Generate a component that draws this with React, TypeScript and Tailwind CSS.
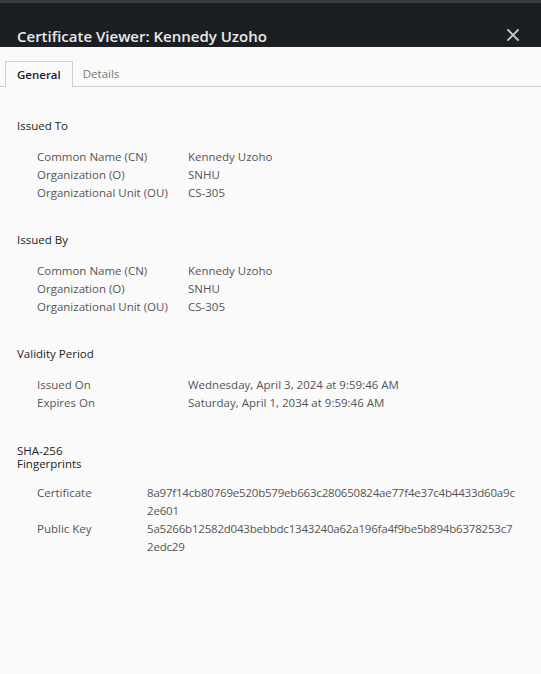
import React from "react";

type Row = [string, React.ReactNode];

function Section({
  title,
  rows,
  labelW,
  className = "",
  titleClass = "leading-[18px]",
  rowsGap = "mt-[13px]",
}: {
  title: React.ReactNode;
  rows: Row[];
  labelW: string;
  className?: string;
  titleClass?: string;
  rowsGap?: string;
}) {
  return (
    <div className={className}>
      <div className={`text-[#222] ${titleClass}`}>{title}</div>
      <div className={`${rowsGap} pl-[20px] flex flex-col`}>
        {rows.map(([k, v], i) => (
          <div key={i} className="flex leading-[18px] text-[#555]">
            <div className={labelW}>{k}</div>
            <div>{v}</div>
          </div>
        ))}
      </div>
    </div>
  );
}

export default function App() {
  return (
    <div
      className="w-[541px] h-[674px] bg-[#fafafa] flex flex-col text-[11.5px]"
      style={{ fontFamily: '"Open Sans", "Noto Sans", sans-serif' }}
    >
      <div className="border-t-[3px] border-[#3b3c3d] bg-[#1b1f22] h-[47px] flex items-start justify-between pl-[17px] pr-[22px]">
        <div className="mt-[23px] text-[15px] leading-[20px] font-semibold text-[#e8eaed]">
          Certificate Viewer: Kennedy Uzoho
        </div>
        <svg
          className="mt-[26px]"
          width="12"
          height="12"
          viewBox="0 0 12 12"
          stroke="#c8cacc"
          strokeWidth="1.8"
          strokeLinecap="square"
        >
          <path d="M1 1L11 11M11 1L1 11" />
        </svg>
      </div>

      <div className="pt-[14px] px-[5px] border-b border-[#cfcfcf] flex items-start">
        <div className="h-[26px] -mb-px border border-b-0 border-[#cfcfcf] bg-[#fafafa] px-[11px] flex items-center font-semibold text-[#222]">
          General
        </div>
        <div className="h-[25px] pl-[10px] flex items-center text-[#777]">Details</div>
      </div>

      <div className="pt-[30px] pl-[17px]">
        <Section
          title="Issued To"
          labelW="w-[151px]"
          rows={[
            ["Common Name (CN)", "Kennedy Uzoho"],
            ["Organization (O)", "SNHU"],
            ["Organizational Unit (OU)", "CS-305"],
          ]}
        />
        <Section
          className="mt-[29px]"
          title="Issued By"
          labelW="w-[151px]"
          rows={[
            ["Common Name (CN)", "Kennedy Uzoho"],
            ["Organization (O)", "SNHU"],
            ["Organizational Unit (OU)", "CS-305"],
          ]}
        />
        <Section
          className="mt-[29px]"
          title="Validity Period"
          labelW="w-[151px]"
          rows={[
            ["Issued On", "Wednesday, April 3, 2024 at 9:59:46 AM"],
            ["Expires On", "Saturday, April 1, 2034 at 9:59:46 AM"],
          ]}
        />
        <Section
          className="mt-[32px]"
          titleClass="leading-[13px]"
          rowsGap="mt-[14px]"
          title={
            <>
              SHA-256
              <br />
              Fingerprints
            </>
          }
          labelW="w-[110px] shrink-0"
          rows={[
            [
              "Certificate",
              <span className="tracking-[-0.2px]">
                8a97f14cb80769e520b579eb663c280650824ae77f4e37c4b4433d60a9c
                <br />
                2e601
              </span>,
            ],
            [
              "Public Key",
              <span className="tracking-[-0.2px]">
                5a5266b12582d043bebbdc1343240a62a196fa4f9be5b894b6378253c7
                <br />
                2edc29
              </span>,
            ],
          ]}
        />
      </div>
    </div>
  );
}
